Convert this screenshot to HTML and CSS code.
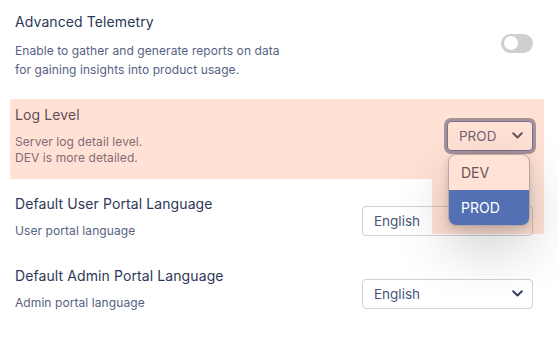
FILE: index.html
```html
<!DOCTYPE html>
<html>
<head>
<meta charset="utf-8">
<link rel="stylesheet" href="styles.css">
</head>
<body>
<div class="page">
  <div class="list">
    <div class="row row-telemetry">
      <div class="info">
        <div class="title">Advanced Telemetry</div>
        <div class="desc desc-wide">Enable to gather and generate reports on data<br>for gaining insights into product usage.</div>
      </div>
      <div class="toggle"><span class="knob"></span></div>
    </div>
    <div class="row row-log">
      <div class="info">
        <div class="title">Log Level</div>
        <div class="desc">Server log detail level.<br>DEV is more detailed.</div>
      </div>
      <div class="select select-log focused">
        <span class="value">PROD</span>
        <svg class="chev" width="11" height="7" viewBox="0 0 11 7"><path d="M1.2 1.2l4.3 4.3 4.3-4.3" fill="none" stroke="currentColor" stroke-width="2" stroke-linecap="round" stroke-linejoin="round"/></svg>
      </div>
    </div>
    <div class="row row-lang">
      <div class="info">
        <div class="title">Default User Portal Language</div>
        <div class="desc">User portal language</div>
      </div>
      <div class="select select-lang">
        <span class="value">English</span>
        <svg class="chev" width="11" height="7" viewBox="0 0 11 7"><path d="M1.2 1.2l4.3 4.3 4.3-4.3" fill="none" stroke="currentColor" stroke-width="2" stroke-linecap="round" stroke-linejoin="round"/></svg>
      </div>
    </div>
    <div class="row row-lang row-admin">
      <div class="info">
        <div class="title">Default Admin Portal Language</div>
        <div class="desc">Admin portal language</div>
      </div>
      <div class="select select-lang">
        <span class="value">English</span>
        <svg class="chev" width="11" height="7" viewBox="0 0 11 7"><path d="M1.2 1.2l4.3 4.3 4.3-4.3" fill="none" stroke="currentColor" stroke-width="2" stroke-linecap="round" stroke-linejoin="round"/></svg>
      </div>
    </div>
  </div>

  <div class="spot spot-row"></div>
  <div class="spot spot-ext"></div>

  <div class="menu">
    <div class="opt">DEV</div>
    <div class="opt active">PROD</div>
  </div>
</div>
</body>
</html>
```

FILE: styles.css
```css
* { box-sizing: border-box; }
html, body { margin: 0; padding: 0; background: #ffffff; }
body {
  font-family: Inter, "Noto Sans", "Liberation Sans", sans-serif;
  width: 558px;
  height: 341px;
  overflow: hidden;
}
.page { position: relative; width: 558px; height: 341px; }
.list { margin-left: 10px; width: 534px; }
.row {
  display: flex;
  justify-content: space-between;
  align-items: center;
  padding-left: 5px;
  padding-right: 11px;
}
.title {
  font-size: 14px;
  line-height: 20px;
  color: #2c3856;
  letter-spacing: 0.1px;
}
.desc {
  margin-top: 9px;
  font-size: 12px;
  line-height: 16px;
  color: #56627f;
  letter-spacing: 0.08px;
}
.desc-wide { line-height: 19px; }

.row-telemetry { padding-top: 12px; padding-bottom: 20px; }
.toggle {
  width: 32px;
  height: 19px;
  border-radius: 10px;
  background: #cfcfcf;
  position: relative;
  margin-bottom: 5px;
}
.knob {
  position: absolute;
  left: 3px;
  top: 2.5px;
  width: 14px;
  height: 14px;
  border-radius: 50%;
  background: #ffffff;
}

.row-log { padding-top: 6px; padding-bottom: 13px; }
.row-lang { padding-top: 15px; padding-bottom: 12px; }
.row-admin { padding-bottom: 13px; }

.select {
  display: flex;
  align-items: center;
  justify-content: space-between;
  height: 30px;
  border: 1px solid #cfd1d6;
  border-radius: 4px;
  background: #ffffff;
  font-size: 13.5px;
  color: #46557a;
  padding: 0 9px 0 11px;
}
.chev { color: #33415f; }
.select-log { width: 86px; }
.select-log.focused {
  border-color: #4d66a8;
  box-shadow: 0 0 0 3px #8a95b0;
}
.select-lang { width: 171px; margin-top: 9px; }
.row-admin .select-lang { margin-top: 10px; }

.spot {
  position: absolute;
  background: rgba(255, 139, 87, 0.25);
  pointer-events: none;
}
.spot-row { left: 10px; top: 99px; width: 534px; height: 80px; }
.spot-ext { left: 432px; top: 179px; width: 112px; height: 55px; }

.menu {
  position: absolute;
  left: 448px;
  top: 154px;
  width: 82px;
  border: 1px solid #b9a69c;
  border-radius: 8px;
  overflow: hidden;
  background: #ffe3d6;
  box-shadow: 0 22px 55px rgba(0, 0, 0, 0.2), 0 3px 8px rgba(0, 0, 0, 0.14);
}
.opt {
  height: 35px;
  display: flex;
  align-items: center;
  padding-left: 12px;
  font-size: 14px;
  color: #6a5558;
}
.opt.active { background: #5370b4; color: #ffffff; }
```
